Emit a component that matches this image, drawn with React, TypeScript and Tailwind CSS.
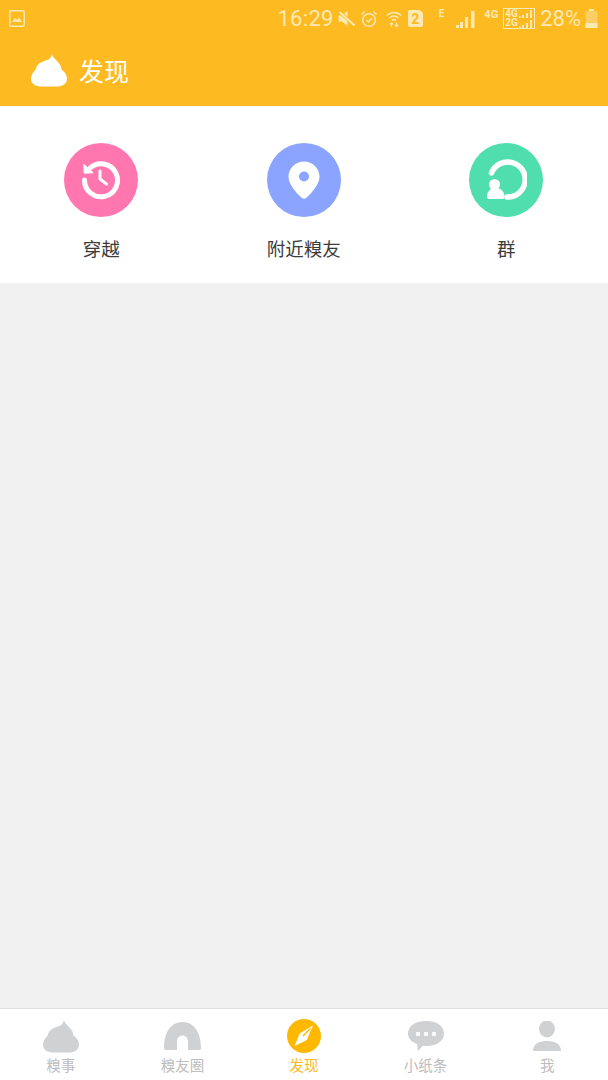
const Poop = ({ className }: { className: string }) => (
  <svg className={className} viewBox="0 0 36 33" fill="currentColor">
    <path d="M21 0C21.500 2.500 23 4 24.500 5.500C27 8 29 10 29.800 12.500C30.200 14 30.200 15 31 16C34 18 36 21 36 25C36 30 31 32.500 25.500 32.500H10.500C5 32.500 0 30 0 25C0 21 2 18 4.500 16C5 13.500 6 11 9 9C12 7 15 6.500 17.500 5.500C19.500 4.500 20.500 2.500 21 0z" />
  </svg>
)

function StatusBar() {
  return (
    <div className="h-[36px] flex items-center pl-[9px] pr-[10px] pt-[1px] text-[#fde9b4]">
      <svg className="w-[16px] h-[17px]" viewBox="0 0 16 17" fill="none">
        <rect x="0.8" y="0.8" width="14.400" height="15.400" rx="1.500" stroke="currentColor" strokeWidth="1.500" />
        <path d="M3 12l3-4 2 2 2-2.500 3 4.500z" fill="currentColor" />
      </svg>
      <div className="flex-1" />
      <span className="text-[22px] leading-none font-['Roboto',sans-serif] tracking-[0.3px]">16:29</span>
      <svg className="w-[17px] h-[17px] ml-[4px]" viewBox="0 0 17 17" fill="currentColor">
        <path d="M0.500 5.500h3.500l5.500-4.500v15l-5.500-4.500H0.500z" />
        <path d="M1 1.500l16 14" stroke="#feba21" strokeWidth="3.500" />
        <path d="M1.500 2l15 13.500" stroke="currentColor" strokeWidth="2" />
      </svg>
      <svg className="w-[18px] h-[18px] ml-[5px]" viewBox="0 0 18 18" fill="none" stroke="currentColor" strokeWidth="1.500">
        <circle cx="9" cy="10" r="6.300" />
        <path d="M6.500 10l2 2 3.500-4M1.500 4.500L4.500 1.500M16.500 4.500L13.500 1.500" />
      </svg>
      <svg className="w-[16px] h-[18px] ml-[8px]" viewBox="0 0 16 18" fill="none" stroke="currentColor" strokeWidth="1.600">
        <path d="M1 5.500c4-4 10-4 14 0M3.500 8c2.600-2.600 6.400-2.600 9 0M6 10.500c1.200-1.200 2.800-1.200 4 0" />
        <path d="M5.500 17v-4M3.800 14.500l1.700-1.700 1.700 1.700M10.500 12.500v4M8.800 15l1.700 1.700 1.700-1.700" strokeWidth="1.200" />
      </svg>
      <div className="w-[15px] h-[17px] ml-[6px] bg-[#fde9b4] rounded-[2px] rounded-tr-[5px] flex items-center justify-center text-[#feba21] text-[14px] leading-none font-bold font-['Roboto',sans-serif]">2</div>
      <span className="ml-[16px] -mt-[9px] text-[10px] leading-none font-bold font-['Roboto',sans-serif]">E</span>
      <svg className="w-[19px] h-[18px] ml-[12px]" viewBox="0 0 19 18" fill="currentColor">
        <path d="M0 15h3v3H0zM4 12h3v6H4zM9 7h3v11H9zM15 1h3.500v17H15z" />
      </svg>
      <span className="ml-[9px] -mt-[9px] text-[11px] leading-none font-bold font-['Roboto',sans-serif]">4G</span>
      <div className="relative ml-[5px] w-[32px] h-[21px] border border-[#fde9b4] text-[10px] leading-none font-bold font-['Roboto',sans-serif]">
        <span className="absolute left-[1px] top-[0px]">4G</span>
        <span className="absolute left-[1px] top-[9px]">2G</span>
        <svg className="absolute right-[1px] top-[1px] w-[14px] h-[18px]" viewBox="0 0 14 18" fill="currentColor">
          <path d="M0 6h1.500v2H0zM3 5h2v3H3zM7 3h2v5H7zM11 0h2v8h-2zM0 16h1.500v2H0zM3 15h2v3H3zM7 13h2v5H7zM11 10h2v8h-2z" />
        </svg>
      </div>
      <span className="ml-[5px] text-[22px] leading-none font-['Roboto',sans-serif]">28%</span>
      <svg className="w-[13px] h-[19px] ml-[4px]" viewBox="0 0 13 19" fill="currentColor">
        <path d="M4 0h5v2H4z" />
        <path d="M0.500 2h12v17h-12z" opacity="0.45" />
        <path d="M0.500 14h12v5h-12z" />
      </svg>
    </div>
  )
}

function Header() {
  return (
    <div className="h-[70px] flex items-center pl-[31px] pb-[2px]">
      <Poop className="w-[36px] h-[33px] text-white" />
      <span className="ml-[12px] text-[25px] leading-none text-white">发现</span>
    </div>
  )
}

function Shortcut({ label, bg, children }: { label: string; bg: string; children: React.ReactNode }) {
  return (
    <div className="flex flex-col items-center">
      <div className={`w-[74px] h-[74px] rounded-full flex items-center justify-center ${bg}`}>{children}</div>
      <span className="mt-[20px] text-[18.5px] leading-[22px] text-[#3c3c3c]">{label}</span>
    </div>
  )
}

function TabItem({ label, active, children }: { label: string; active?: boolean; children: React.ReactNode }) {
  return (
    <div className="flex flex-col items-center">
      <div className="h-[42px] w-full flex items-end justify-center">{children}</div>
      <span className={`mt-[4px] text-[14.500px] leading-[16px] ${active ? 'text-[#ffb81c]' : 'text-[#bdbdbd]'}`}>{label}</span>
    </div>
  )
}

export default function App() {
  return (
    <div className="w-[608px] h-[1080px] flex flex-col bg-[#f1f1f1] font-['Noto_Sans_CJK_SC','Noto_Sans',sans-serif]">
      <div className="bg-[#feba21]">
        <StatusBar />
        <Header />
      </div>

      <div className="h-[177px] bg-white grid grid-cols-3 pt-[37px] pr-[0.5px]">
        <Shortcut label="穿越" bg="bg-[#ff77ae]">
          <svg className="w-[42px] h-[42px]" viewBox="0 0 42 42" fill="none" stroke="white" strokeLinecap="round" strokeLinejoin="round">
            <path d="M4.500 21A16.500 16.500 0 1 0 10 9" strokeWidth="5" />
            <path d="M4 6l0.500 8 8-0.500z" fill="white" strokeWidth="1.500" />
            <path d="M20 12v8l6.500 5" strokeWidth="3" />
          </svg>
        </Shortcut>
        <Shortcut label="附近糗友" bg="bg-[#8aa4ff]">
          <svg className="w-[32px] h-[38px]" viewBox="0 0 32 38" fill="white">
            <path fillRule="evenodd" d="M16 0.500c8.500 0 15.500 6.700 15.500 15.200 0 7.300-7.800 16.300-13.400 21.300-1.200 1-3 1-4.200 0C8.300 32 0.500 23 0.500 15.700 0.500 7.200 7.500 0.500 16 0.500zM16 10.500a5 5 0 1 0 0 10 5 5 0 0 0 0-10z" />
          </svg>
        </Shortcut>
        <Shortcut label="群" bg="bg-[#50deae]">
          <svg className="w-[42px] h-[42px]" viewBox="0 0 42 42" fill="white">
            <path d="M6.500 14A17.500 17.500 0 1 1 22 38" fill="none" stroke="white" strokeWidth="5.500" strokeLinecap="round" />
            <circle cx="9.500" cy="25.500" r="5.500" />
            <path d="M2 38c0-5 2.500-9 8.500-9s9 4 9 9c0 1-1 2-2 2H4c-1 0-2-1-2-2z" />
          </svg>
        </Shortcut>
      </div>

      <div className="flex-1" />

      <div className="h-[72px] bg-white border-t border-[#dfdfdf] grid grid-cols-5 pt-[2px]">
        <TabItem label="糗事">
          <Poop className="w-[36px] h-[33px] text-[#d0d1d3]" />
        </TabItem>
        <TabItem label="糗友圈">
          <svg className="w-[37px] h-[28px] mb-[3px]" viewBox="0 0 37 28" fill="#d0d1d3">
            <path d="M0 26C0 12 6 0 18.500 0S37 12 37 26c0 1-0.600 2-2 2H24v-9c0-3-2.500-5.500-5.500-5.500S13 16 13 19v9H2c-1.400 0-2-1-2-2z" />
          </svg>
        </TabItem>
        <TabItem label="发现" active>
          <svg className="w-[34px] h-[34px]" viewBox="0 0 34 34">
            <circle cx="17" cy="17" r="17" fill="#ffb800" />
            <path d="M25.500 7L13 14.500L8 26.500L19.500 21z" fill="white" stroke="white" strokeWidth="0.500" strokeLinejoin="round" />
            <path d="M23.500 9.500L16 17" stroke="#ffb800" strokeWidth="1.500" />
          </svg>
        </TabItem>
        <TabItem label="小纸条">
          <svg className="w-[36px] h-[30px] mb-[2px]" viewBox="0 0 36 30" fill="#d0d1d3">
            <path d="M18 0c10 0 18 4.500 18 12.500S28 25 18 25c-1.200 0-2.300 0-3.400-0.200L10.500 29.500c-0.500 0.500-1 0.200-1-0.500v-5.800C3.500 21.200 0 17.200 0 12.500 0 4.500 8 0 18 0z" />
            <circle cx="10" cy="13" r="2.200" fill="white" />
            <circle cx="18" cy="13" r="2.200" fill="white" />
            <circle cx="26" cy="13" r="2.200" fill="white" />
          </svg>
        </TabItem>
        <TabItem label="我">
          <svg className="w-[28px] h-[30px] mb-[2px]" viewBox="0 0 28 30" fill="#d0d1d3">
            <ellipse cx="14" cy="8" rx="8" ry="8.500" />
            <path d="M0 30c0-1 0-2 0.500-3C2 22 7 20 14 20s12 2 13.500 7c0.500 1 0.500 2 0.500 3z" />
          </svg>
        </TabItem>
      </div>
    </div>
  )
}
